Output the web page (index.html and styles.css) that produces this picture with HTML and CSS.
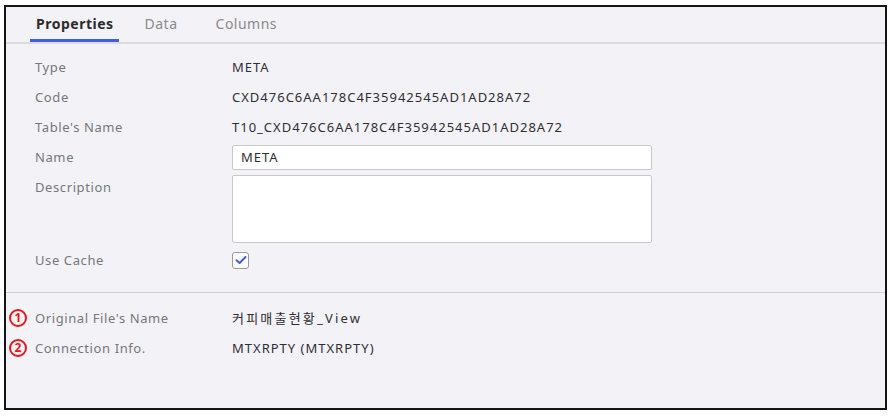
FILE: index.html
```html
<!DOCTYPE html>
<html lang="ko">
<head>
<meta charset="utf-8">
<link rel="stylesheet" href="styles.css">
</head>
<body>
<div class="frame">
  <div class="tabs">
    <div class="tab active">Properties</div>
    <div class="tab">Data</div>
    <div class="tab tab-cols">Columns</div>
  </div>
  <div class="section top">
    <div class="row"><span class="mark"></span><span class="label">Type</span><span class="value">META</span></div>
    <div class="row"><span class="mark"></span><span class="label">Code</span><span class="value">CXD476C6AA178C4F35942545AD1AD28A72</span></div>
    <div class="row"><span class="mark"></span><span class="label">Table's Name</span><span class="value">T10_CXD476C6AA178C4F35942545AD1AD28A72</span></div>
    <div class="row"><span class="mark"></span><span class="label">Name</span><span class="value"><div class="input">META</div></span></div>
    <div class="row row-top"><span class="mark"></span><span class="label">Description</span><span class="value"><div class="textarea"></div></span></div>
    <div class="row"><span class="mark"></span><span class="label">Use Cache</span><span class="value"><span class="checkbox"><svg width="12" height="10" viewBox="0 0 12 10"><path d="M1.5 5.2 L4.6 8 L10.5 2" fill="none" stroke="#3f5ee0" stroke-width="2" stroke-linecap="round" stroke-linejoin="round"/></svg></span></span></div>
  </div>
  <div class="section bottom">
    <div class="row"><span class="mark"><span class="num">1</span></span><span class="label">Original File's Name</span><span class="value value-ko">커피매출현황_View</span></div>
    <div class="row"><span class="mark"><span class="num">2</span></span><span class="label">Connection Info.</span><span class="value">MTXRPTY (MTXRPTY)</span></div>
  </div>
</div>
</body>
</html>
```
FILE: styles.css
```css
html, body {
  margin: 0;
  padding: 0;
  background: #ffffff;
}
body {
  font-family: "Noto Sans", "Open Sans", "Noto Sans CJK KR", sans-serif;
  font-size: 13px;
}
.frame {
  margin: 5px 0 0 4px;
  width: 883px;
  height: 405px;
  box-sizing: border-box;
  border: 2px solid #141414;
  background: #f3f2f7;
}
.tabs {
  display: flex;
  padding-left: 24px;
  border-bottom: 2px solid #dcdce0;
  height: 35px;
}
.tab {
  padding: 0 6px;
  margin-right: 20px;
  font-size: 14px;
  letter-spacing: 0.5px;
  color: #8a8a8e;
  display: flex;
  align-items: center;
  border-bottom: 3px solid transparent;
  box-sizing: border-box;
  height: 35px;
}
.tab.active {
  color: #2b2b2e;
  font-weight: 700;
  border-bottom-color: #3f5ee6;
  padding-right: 5px;
}
.tab-cols {
  margin-left: 6px;
}
.section.top {
  padding: 8px 0 17px;
  border-bottom: 1px solid #d2d2d6;
}
.section.bottom {
  padding-top: 10px;
}
.row {
  display: grid;
  grid-template-columns: 29px 197px 420px;
  align-items: center;
  min-height: 30px;
}
.row-top {
  align-items: start;
}
.row-top .label {
  padding-top: 5px;
}
.label {
  color: #77777b;
  line-height: 20px;
  letter-spacing: 0.6px;
}
.value {
  color: #2f2f33;
  line-height: 20px;
  letter-spacing: 1px;
  display: flex;
  align-items: center;
}
.value-ko {
  letter-spacing: 2.2px;
}
.mark {
  display: flex;
  align-items: center;
  padding-left: 3px;
}
.num {
  width: 18px;
  height: 18px;
  box-sizing: border-box;
  border: 2px solid #e8161c;
  border-radius: 50%;
  color: #e8161c;
  font-weight: 700;
  font-size: 12px;
  line-height: 14px;
  text-align: center;
  letter-spacing: 0;
}
.input {
  width: 420px;
  height: 25px;
  box-sizing: border-box;
  background: #fff;
  border: 1px solid #c8c8cc;
  border-radius: 2px;
  padding: 0 8px;
  line-height: 23px;
  color: #2f2f33;
}
.textarea {
  width: 420px;
  height: 68px;
  margin: 3px 0 2px;
  box-sizing: border-box;
  background: #fff;
  border: 1px solid #c8c8cc;
  border-radius: 2px;
}
.checkbox {
  width: 17px;
  height: 17px;
  box-sizing: border-box;
  border: 1px solid #9a9a9e;
  border-radius: 3px;
  background: #fff;
  display: flex;
  align-items: center;
  justify-content: center;
}
```
